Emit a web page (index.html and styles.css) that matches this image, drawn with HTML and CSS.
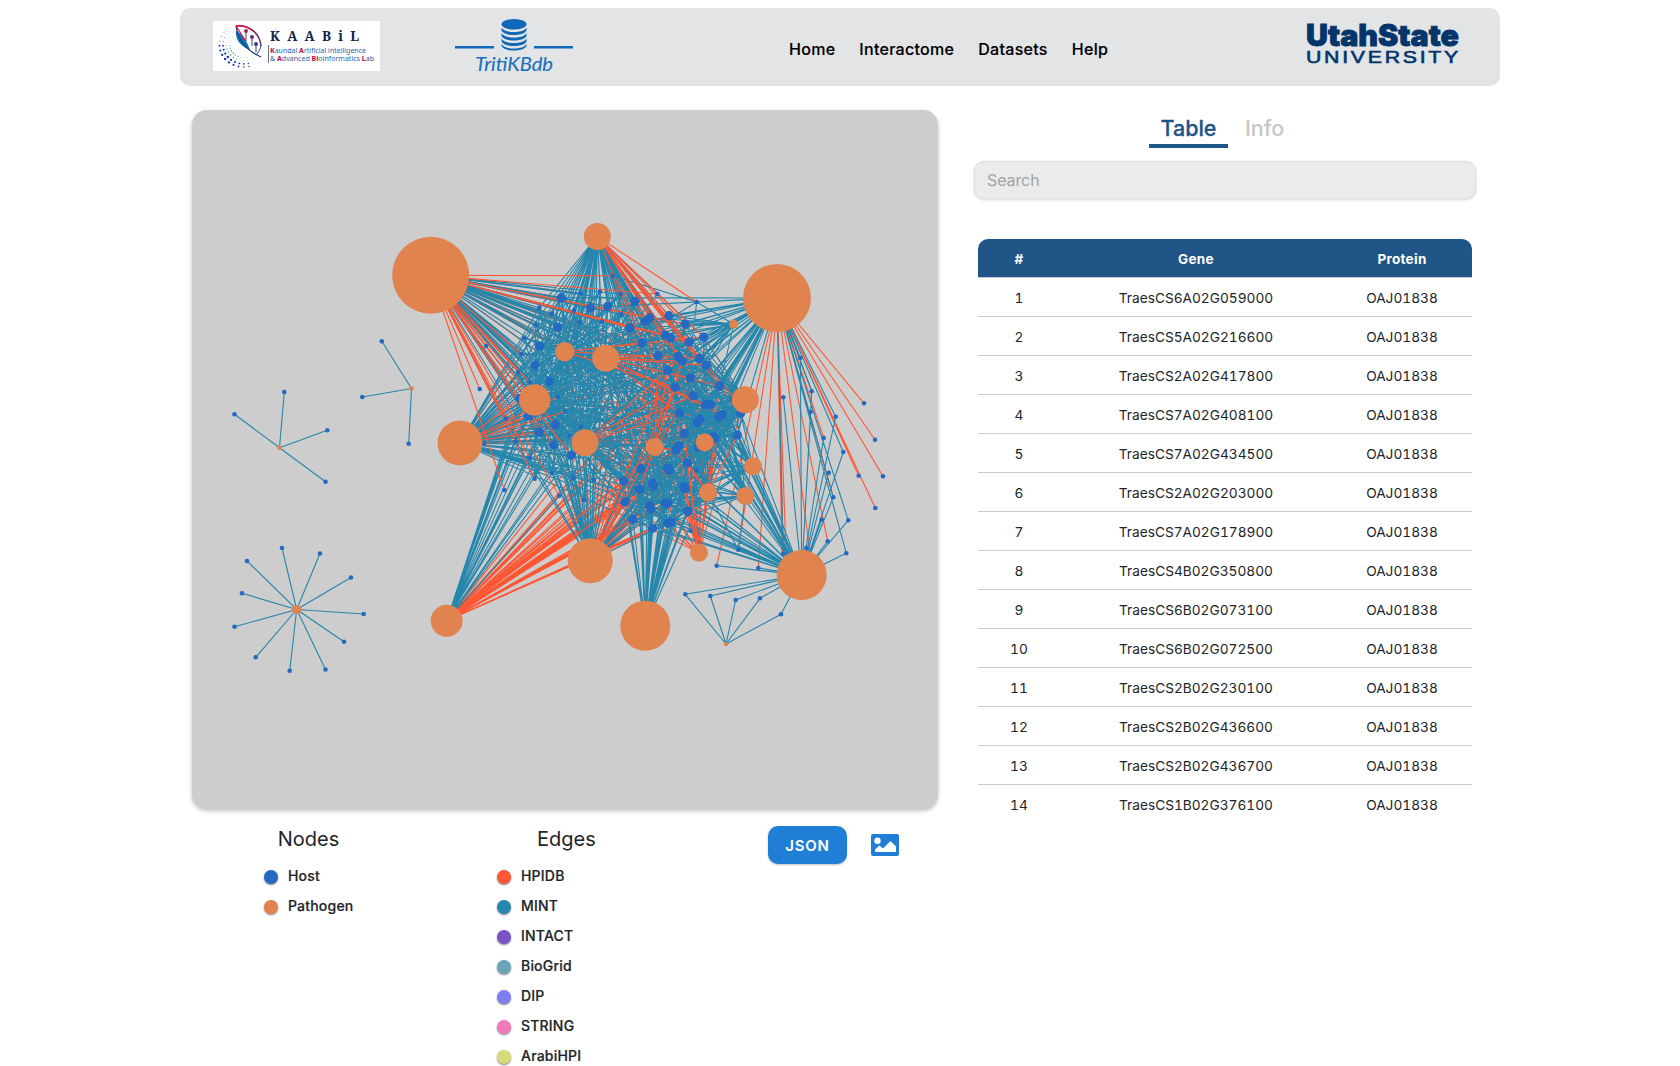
FILE: index.html
```html
<!DOCTYPE html>
<html lang="en">
<head>
<meta charset="utf-8">
<title>TritiKBdb</title>
<link rel="stylesheet" href="styles.css">
</head>
<body>
<header class="topbar">
  <svg class="logo-lab" viewBox="0 0 167 50">
    <rect width="167" height="50" fill="#fff"/>
    <g id="swirl"></g>
    <path d="M23 10C22 17 26 25 37 29C34 20 30 13 23 10Z" fill="#1673b8"/>
    <path d="M23 5C25 17 32 29 48 36" fill="none" stroke="#173b78" stroke-width="1.3"/>
    <path d="M23 5C35 3 47 12 48 25" fill="none" stroke="#5b2a68" stroke-width="1.4"/>
    <path d="M23 5C29 4 36 6 40 10M23 5L32 19" fill="none" stroke="#e01440" stroke-width="1.3"/>
    <path d="M48 24C48 27 46 30 44 33M33 10V20M39 15V25M43 22V31" fill="none" stroke="#373c79" stroke-width="1"/>
    <circle cx="33" cy="10" r="2" fill="#b52049"/><circle cx="39" cy="16" r="2" fill="#66306c"/><circle cx="43" cy="23" r="2" fill="#2b4389"/>
    <text class="lab-name" x="57" y="19.500" textLength="89">KAABiL</text>
    <path d="M55.500 24V42" stroke="#444b63" stroke-width=".8"/>
    <text class="lab-sub" x="57" y="32.300" textLength="96" lengthAdjust="spacingAndGlyphs"><tspan class="cap">K</tspan>aundal <tspan class="cap">A</tspan>rtificial intelligence</text>
    <text class="lab-sub" x="57" y="39.500" textLength="104" lengthAdjust="spacingAndGlyphs">&amp; <tspan class="cap">A</tspan>dvanced <tspan class="cap">Bi</tspan>oinformatics <tspan class="cap">L</tspan>ab</text>
  </svg>
  <svg class="logo-db" viewBox="0 0 118 58">
    <g fill="#0f68b8">
      <path d="M0 28H39V30.500H0ZM79 28H118V30.500H79Z"/>
      <ellipse cx="59" cy="6.300" rx="12.500" ry="5.300"/>
      <path d="M46.500 9.500C49 15.500 69 15.500 71.500 9.500V12.500C69 18.500 49 18.500 46.500 12.500Z"/>
      <path d="M46.500 15C49 21 69 21 71.500 15V18C69 24 49 24 46.500 18Z"/>
      <path d="M46.500 20.500C49 26.500 69 26.500 71.500 20.500V23.500C69 29.500 49 29.500 46.500 23.500Z"/>
      <path d="M46.500 26C49 32 69 32 71.500 26V28C69 34 49 34 46.500 28Z"/>
    </g>
    <text class="db-name" x="20" y="53" textLength="78" lengthAdjust="spacingAndGlyphs">TritiKBdb</text>
  </svg>
  <nav class="menu"><a>Home</a><a>Interactome</a><a>Datasets</a><a>Help</a></nav>
  <svg class="logo-usu" viewBox="0 0 156 54">
    <text class="usu-top" x="1" y="34" textLength="153" lengthAdjust="spacingAndGlyphs">UtahState</text>
    <text class="usu-bottom" x="1" y="50.500" textLength="155" lengthAdjust="spacingAndGlyphs">UNIVERSITY</text>
  </svg>
</header>
<main class="content">
  <section class="left">
    <div class="graph"><svg id="network" viewBox="192 110 746 699"></svg></div>
    <div class="below">
      <div class="legend nodes">
        <h2>Nodes</h2>
        <ul>
          <li><i class="dot host"></i>Host</li>
          <li><i class="dot pathogen"></i>Pathogen</li>
        </ul>
      </div>
      <div class="legend edges">
        <h2>Edges</h2>
        <ul>
          <li><i class="dot hpidb"></i>HPIDB</li>
          <li><i class="dot mint"></i>MINT</li>
          <li><i class="dot intact"></i>INTACT</li>
          <li><i class="dot biogrid"></i>BioGrid</li>
          <li><i class="dot dip"></i>DIP</li>
          <li><i class="dot string"></i>STRING</li>
          <li><i class="dot arabi"></i>ArabiHPI</li>
        </ul>
      </div>
      <div class="export">
        <button class="json">JSON</button>
        <svg class="picture" viewBox="0 0 28 22"><path fill="#207ed6" fill-rule="evenodd" d="M2 0H26Q28 0 28 2V20Q28 22 26 22H2Q0 22 0 20V2Q0 0 2 0ZM6.500 3.500A3.200 3.200 0 1 0 6.500 9.900A3.200 3.200 0 1 0 6.500 3.500ZM4 18H25V12.500L19.500 7L12 14.500L8.500 11.500L4 15.500Z"/></svg>
      </div>
    </div>
  </section>
  <section class="right">
    <div class="tabs"><span class="tab active">Table</span><span class="tab">Info</span></div>
    <input class="search" placeholder="Search">
    <div class="table-wrap">
      <table>
        <thead><tr><th class="c-num">#</th><th>Gene</th><th class="c-prot">Protein</th></tr></thead>
        <tbody>
          <tr><td>1</td><td>TraesCS6A02G059000</td><td>OAJ01838</td></tr>
          <tr><td>2</td><td>TraesCS5A02G216600</td><td>OAJ01838</td></tr>
          <tr><td>3</td><td>TraesCS2A02G417800</td><td>OAJ01838</td></tr>
          <tr><td>4</td><td>TraesCS7A02G408100</td><td>OAJ01838</td></tr>
          <tr><td>5</td><td>TraesCS7A02G434500</td><td>OAJ01838</td></tr>
          <tr><td>6</td><td>TraesCS2A02G203000</td><td>OAJ01838</td></tr>
          <tr><td>7</td><td>TraesCS7A02G178900</td><td>OAJ01838</td></tr>
          <tr><td>8</td><td>TraesCS4B02G350800</td><td>OAJ01838</td></tr>
          <tr><td>9</td><td>TraesCS6B02G073100</td><td>OAJ01838</td></tr>
          <tr><td>10</td><td>TraesCS6B02G072500</td><td>OAJ01838</td></tr>
          <tr><td>11</td><td>TraesCS2B02G230100</td><td>OAJ01838</td></tr>
          <tr><td>12</td><td>TraesCS2B02G436600</td><td>OAJ01838</td></tr>
          <tr><td>13</td><td>TraesCS2B02G436700</td><td>OAJ01838</td></tr>
          <tr><td>14</td><td>TraesCS1B02G376100</td><td>OAJ01838</td></tr>
        </tbody>
      </table>
    </div>
  </section>
</main>
<script src="graph.js"></script>
</body>
</html>
```
FILE: styles.css
```css
* { box-sizing: border-box; }
body { margin: 0; padding: 8px 180px 0; height: 1066px; overflow: hidden; background: #fff; color: #212529; font-family: Inter, sans-serif; }
.topbar { height: 78px; background: #e3e4e6; border-radius: 10px; display: flex; align-items: flex-start; padding: 0 39px 0 33px; }
.logo-lab { width: 167px; height: 50px; margin-top: 13px; }
.lab-name { font: bold 13.500px "Noto Serif", "DejaVu Serif", "Liberation Serif", serif; fill: #12264b; }
.lab-sub { font: 7.600px "Noto Sans", "Open Sans", sans-serif; fill: #2c62ab; }
.cap { font-weight: bold; fill: #b30f49; }
.logo-db { width: 118px; height: 58px; margin: 10px 0 0 75px; }
.db-name { font: italic 20px Lato, sans-serif; fill: #1a72bf; stroke: #1a72bf; stroke-width: .15px; }
.menu { display: flex; gap: 24px; margin: 31px 0 0 216px; font-size: 16px; line-height: 20px; font-weight: 500; letter-spacing: .29px; color: #000; -webkit-text-stroke: .15px #000; }
.logo-usu { width: 156px; height: 54px; margin: 4px 0 0 auto; }
.usu-top { font: 900 29.500px Inter, sans-serif; fill: #03356b; stroke: #03356b; stroke-width: .8px; }
.usu-bottom { font: 500 17.300px "Liberation Sans", sans-serif; letter-spacing: 2.200px; fill: #03356b; stroke: #03356b; stroke-width: .6px; }
.content { display: flex; padding: 24px 12px 0; }
.left { width: 746px; }
.graph { height: 699px; background: #cdcdcd; border-radius: 15px; box-shadow: 0 2px 4px rgba(0,0,0,.25); overflow: hidden; }
.graph svg { display: block; width: 746px; height: 699px; }
.below { display: flex; align-items: flex-start; padding-top: 16px; }
.legend h2 { margin: 0; font-size: 20px; line-height: 28px; font-weight: 400; text-align: center; }
.legend ul { list-style: none; margin: 8px 0 0; padding: 0; }
.legend li { display: flex; align-items: center; height: 30px; font-size: 14px; font-weight: 500; letter-spacing: .2px; padding-bottom: 1px; -webkit-text-stroke: .2px #212529; }
.nodes { width: 90px; margin-left: 72px; }
.nodes h2 { margin-left: -1px; }
.edges { width: 90px; margin-left: 143px; }
.edges h2 { padding-left: 40px; text-align: left; }
.dot { width: 14px; height: 14px; border-radius: 50%; margin-right: 10px; box-shadow: 0 1px 2px rgba(0,0,0,.5); position: relative; top: 1px; }
.host { background: #2469c2; } .pathogen { background: #e0834f; }
.hpidb { background: #ff5733; } .mint { background: #2786ab; }
.intact { background: #7a54c7; } .biogrid { background: #6ca5ba; }
.dip { background: #7f7ef0; } .string { background: #f07bba; } .arabi { background: #d6da78; }
.export { display: flex; align-items: center; gap: 24px; margin: 1px 0 0 181px; }
.json { width: 79px; height: 38px; border: 0; border-radius: 10px; background: #207ed6; color: #fff; font: 600 15px Inter, sans-serif; letter-spacing: .8px; padding: 0; box-shadow: 0 1px 2px rgba(0,0,0,.25); }
.picture { width: 28px; height: 22px; }
.right { width: 502px; margin-left: 36px; display: flex; flex-direction: column; }
.tabs { display: flex; padding-left: 175px; gap: 17px; font-size: 21.500px; line-height: 37px; font-weight: 500; height: 38px; }
.tab { height: 38px; width: 79px; text-align: center; color: #c6c6c6; }
.tab + .tab { width: 40px; text-align: left; }
.active { color: #205588; border-bottom: 4px solid #205588; -webkit-text-stroke: .3px #205588; }
.search { margin-top: 13px; width: 502px; height: 38px; border: 1px solid #dfdfdf; border-radius: 10px; background: #ebebeb; padding: 0 12px; font: 16px Inter, sans-serif; letter-spacing: -.1px; box-shadow: 0 1px 3px rgba(0,0,0,.16); }
.search::placeholder { color: #a3a3a3; opacity: 1; }
.table-wrap { margin: 40px 4px 0; height: 577px; overflow: hidden; }
table { width: 494px; table-layout: fixed; border-collapse: separate; border-spacing: 0; text-align: center; font-size: 13.700px; font-variant-numeric: tabular-nums; }
th, td { height: 39px; padding: 1px 0 0; border-bottom: 1px solid #c8cacc; }
th { background: #205588; color: #fff; font-weight: 700; font-size: 13.500px; letter-spacing: .3px; }
th:first-child { border-top-left-radius: 10px; } th:last-child { border-top-right-radius: 10px; }
tr:last-child td { border-bottom-color: transparent; }
thead tr:last-child th { border-bottom-color: #c8cacc; }
.c-num { width: 82px; } .c-prot { width: 140px; }
```
FILE: graph.js
```js
const NS = 'http://www.w3.org/2000/svg';
const svg = document.getElementById('network');
const TEAL = '#2786ab', RED = '#ff5733';

const pathogens = [
  [430.7,275.3,38.5],[597.3,236.5,13.5],[777,298,34],[460,443,22.5],[534.7,400,15.7],
  [564.7,351.7,9.7],[605.7,358.3,13.5],[585,442.7,13.5],[654.7,447,9],[704.7,442.3,9],
  [745.3,399.7,13.5],[753,466.3,9],[745.3,496,9],[708,492.3,9],[733.7,324.3,4.5],
  [590.3,560.7,22.5],[699,552.7,9],[801.7,575,25],[645.3,625.7,25],[446.7,620.7,16],
  [726,644,2.3],[279.5,447.8,2.3],[411.5,388.5,2.3],[296.7,609.5,4.6]
];

// Node positions inside the dense core are kept at triple scale.
const core = list => list.map(([x, y]) => [500 + x / 3, 270 + y / 3]);
const west = core([[184,83],[173,171],[119,228],[105,286],[148,334],[272,114],[323,109],[405,94],[85,438],[118,486],[166,464],[161,525],[214,556],[60,385]]);
const east = core([[390,173],[435,154],[449,143],[507,137],[556,162],[427,218],[496,195],[511,204],[567,216],[611,201],[474,257],[535,260],[547,273],[599,265],[619,286],[503,302],[571,324],[525,352],[659,347],[579,377],[616,404],[631,404],[538,429],[656,440],[666,434],[592,457],[600,448],[553,491],[528,541],[536,528],[645,505],[712,495],[640,500],[706,388],[722,430],[595,532]]);
const south = core([[423,596],[502,594],[508,600],[562,579],[371,633],[419,658],[458,640],[461,648],[551,650],[556,656],[375,696],[448,707],[452,717],[496,700],[504,700],[564,724],[399,749],[458,775],[503,760],[514,756]]);
const ring = core([[300,65],[242,70],[362,72],[364,133],[222,122],[156,131],[118,113],[107,164],[72,204],[63,253],[54,306],[89,337],[240,158],[306,155],[174,381],[195,425],[243,471],[208,497],[47,515],[17,446],[89,564],[104,626],[156,609],[220,624],[281,630],[252,690]]);
const shared = [[800.3,358],[783.3,397.3],[811.7,391.3],[810.7,411.7],[835.7,416.7],[823.7,438],[843.3,452],[828.7,472.7],[833.3,497.3],[821.7,519.7],[848.3,520.3],[827.7,541.3],[846.3,553.3],[806.3,548],[783.3,553.7]];
const outer = [[864,403.3],[875,439.7],[883,476.3],[858.7,475.7],[875.3,508]];
const fan = [[685.3,594.3],[710.3,596],[735.7,600],[760,598.3],[781,614.3]];
const low = [[716.7,565.7],[738.3,549.7],[758.3,568]];
const loose = [[613,275.7],[657.3,294],[696.7,302],[486,346],[479.7,389],[484,444],[504.3,490],[559.3,495.7],[696.7,470],[690.7,530.7]];
const star1 = [[284.3,392],[234.5,414.3],[327.3,430.2],[325.5,481.7]];
const star2 = [[381.8,341.3],[362.3,397],[408.7,443.7]];
const star3 = [[247,561],[282,548],[320,553.5],[351,577.5],[363.7,614],[344,641.7],[325.5,669.5],[289.7,670.8],[255.7,657.3],[234.5,626.7],[242,593.3]];

const layers = [];
function layer(colour) {
  layers.push({ colour, d: '' });
}
function link(p, node) {
  layers[layers.length - 1].d += `M${pathogens[p][0]} ${pathogens[p][1]}L${node[0]} ${node[1]}`;
}
function fanOut(p, nodes, every = 1, skip = 0) {
  nodes.forEach((n, i) => { if ((i + skip) % every === 0) link(p, n); });
}
function most(p, nodes) {
  nodes.forEach((n, i) => { if ((i + p) % 4 !== 0) link(p, n); });
}

// HPIDB interactions
layer(RED);
fanOut(0, east, 2); fanOut(0, ring, 2, 1); fanOut(0, west, 3);
fanOut(1, east, 2);
fanOut(2, outer); fanOut(2, shared, 3, 1); fanOut(2, low);
fanOut(2, [[786,553],[782,554],[812,568]]);
fanOut(3, west, 2); fanOut(3, east, 3);
fanOut(4, east, 3, 1); fanOut(6, east, 2); fanOut(6, south, 3);
fanOut(7, east, 3, 1); fanOut(7, south, 3);
fanOut(8, east, 2); fanOut(8, south, 2); fanOut(9, south, 2);
fanOut(10, east, 3); fanOut(13, east, 3);
fanOut(15, east, 2); fanOut(15, south, 2);
fanOut(16, east, 2); fanOut(16, south, 2);
fanOut(19, east.slice(10)); fanOut(19, south);

// MINT interactions
layer(TEAL);
[0, 1, 3, 4, 5, 6, 7, 15, 19].forEach(p => fanOut(p, west));
[0, 1, 3, 4, 5, 6, 7].forEach(p => most(p, ring));
fanOut(15, ring, 2); fanOut(19, ring.slice(14, 24), 2);
[0, 1, 3, 5, 6].forEach(p => { fanOut(p, east, 2, p); fanOut(p, south, 2, p); });
[4, 7].forEach(p => { fanOut(p, east, 3, p); fanOut(p, south, 2, p); });
most(2, east); fanOut(2, south, 2); fanOut(2, west, 3);
fanOut(10, east); fanOut(10, south); fanOut(10, west, 2);
fanOut(17, east, 2); fanOut(17, south);
fanOut(18, east, 2); fanOut(18, south);
[8, 9, 11, 12, 13].forEach(p => { fanOut(p, east, 3, p); fanOut(p, south, 2, p); });
fanOut(14, east.slice(0, 19)); fanOut(14, [loose[2]]);
fanOut(15, south, 2); fanOut(15, east, 3, 1);
fanOut(1, [loose[0]]); fanOut(6, [loose[1], loose[2]]); fanOut(19, [loose[7]]);
layers[1].d += 'M613 275.7L696.7 302L692 342';
fanOut(2, shared, 2); fanOut(17, shared); fanOut(17, low);
fanOut(17, fan); fanOut(20, fan);
fanOut(12, [low[1]]); fanOut(13, [low[1]]);
fanOut(21, star1); fanOut(22, star2); fanOut(23, star3);

layer(RED);
fanOut(0, [loose[0], loose[1], loose[3], loose[4], loose[6], loose[7]]);
fanOut(0, west.slice(8)); fanOut(0, [ring[9], ring[10], ring[11], ring[18], ring[19], ring[20], ring[21]]);
fanOut(0, east.slice(0, 9), 2);
fanOut(1, east.slice(3, 15), 2); fanOut(1, [loose[2], east[18], east[33]]);
fanOut(3, [west[8], west[9], west[13], ring[14], ring[15]]);
fanOut(6, east.slice(10, 26), 2); fanOut(5, east.slice(5, 20), 4);
fanOut(8, [south[0], south[4], south[5], east[15], east[17], east[22], east[28], east[10], east[12]]);
fanOut(7, [east[15], east[17], east[19], east[22]]);
fanOut(15, [south[0], south[4], south[10], south[16], south[5], east[17], east[15]]);
fanOut(16, [south[8], south[15], south[9], south[3], east[30], east[27]]);
fanOut(19, [south[10], south[16], south[17], south[4]]);
fanOut(13, [east[28], east[30], east[31], south[3]]);

function add(tag, attrs) {
  const el = document.createElementNS(NS, tag);
  for (const k in attrs) el.setAttribute(k, attrs[k]);
  svg.appendChild(el);
}
layers.forEach(l => add('path', { d: l.d, stroke: l.colour, 'stroke-width': 1.1, fill: 'none' }));
const dots = (nodes, r) => nodes.forEach(([x, y]) => add('circle', { cx: x, cy: y, r, fill: '#2469c2' }));
[west, east, south].forEach(g => dots(g, 4.6));
[ring, shared, outer, fan, low, loose, star1, star2, star3].forEach(g => dots(g, 2.3));
pathogens.forEach(([x, y, r]) => add('circle', { cx: x, cy: y, r, fill: '#e0834f' }));

// Dotted swirl of the lab logo
const swirl = document.getElementById('swirl');
for (let arc = 0; arc < 4; arc++) {
  for (let i = 0; i < 13; i++) {
    const a = (78 + i * 12.5) * Math.PI / 180, r = 14 + arc * 3.5;
    const c = document.createElementNS(NS, 'circle');
    c.setAttribute('cx', 31 + r * Math.cos(a));
    c.setAttribute('cy', 24 + r * .9 * Math.sin(a));
    c.setAttribute('r', Math.max(.4, (arc > 1 ? 1.25 : .8) - Math.abs(i - 5) * .11));
    c.setAttribute('fill', i > 8 ? '#8ea9dc' : arc < 2 ? '#3d8b8c' : '#1a33c8');
    swirl.appendChild(c);
  }
}
```
